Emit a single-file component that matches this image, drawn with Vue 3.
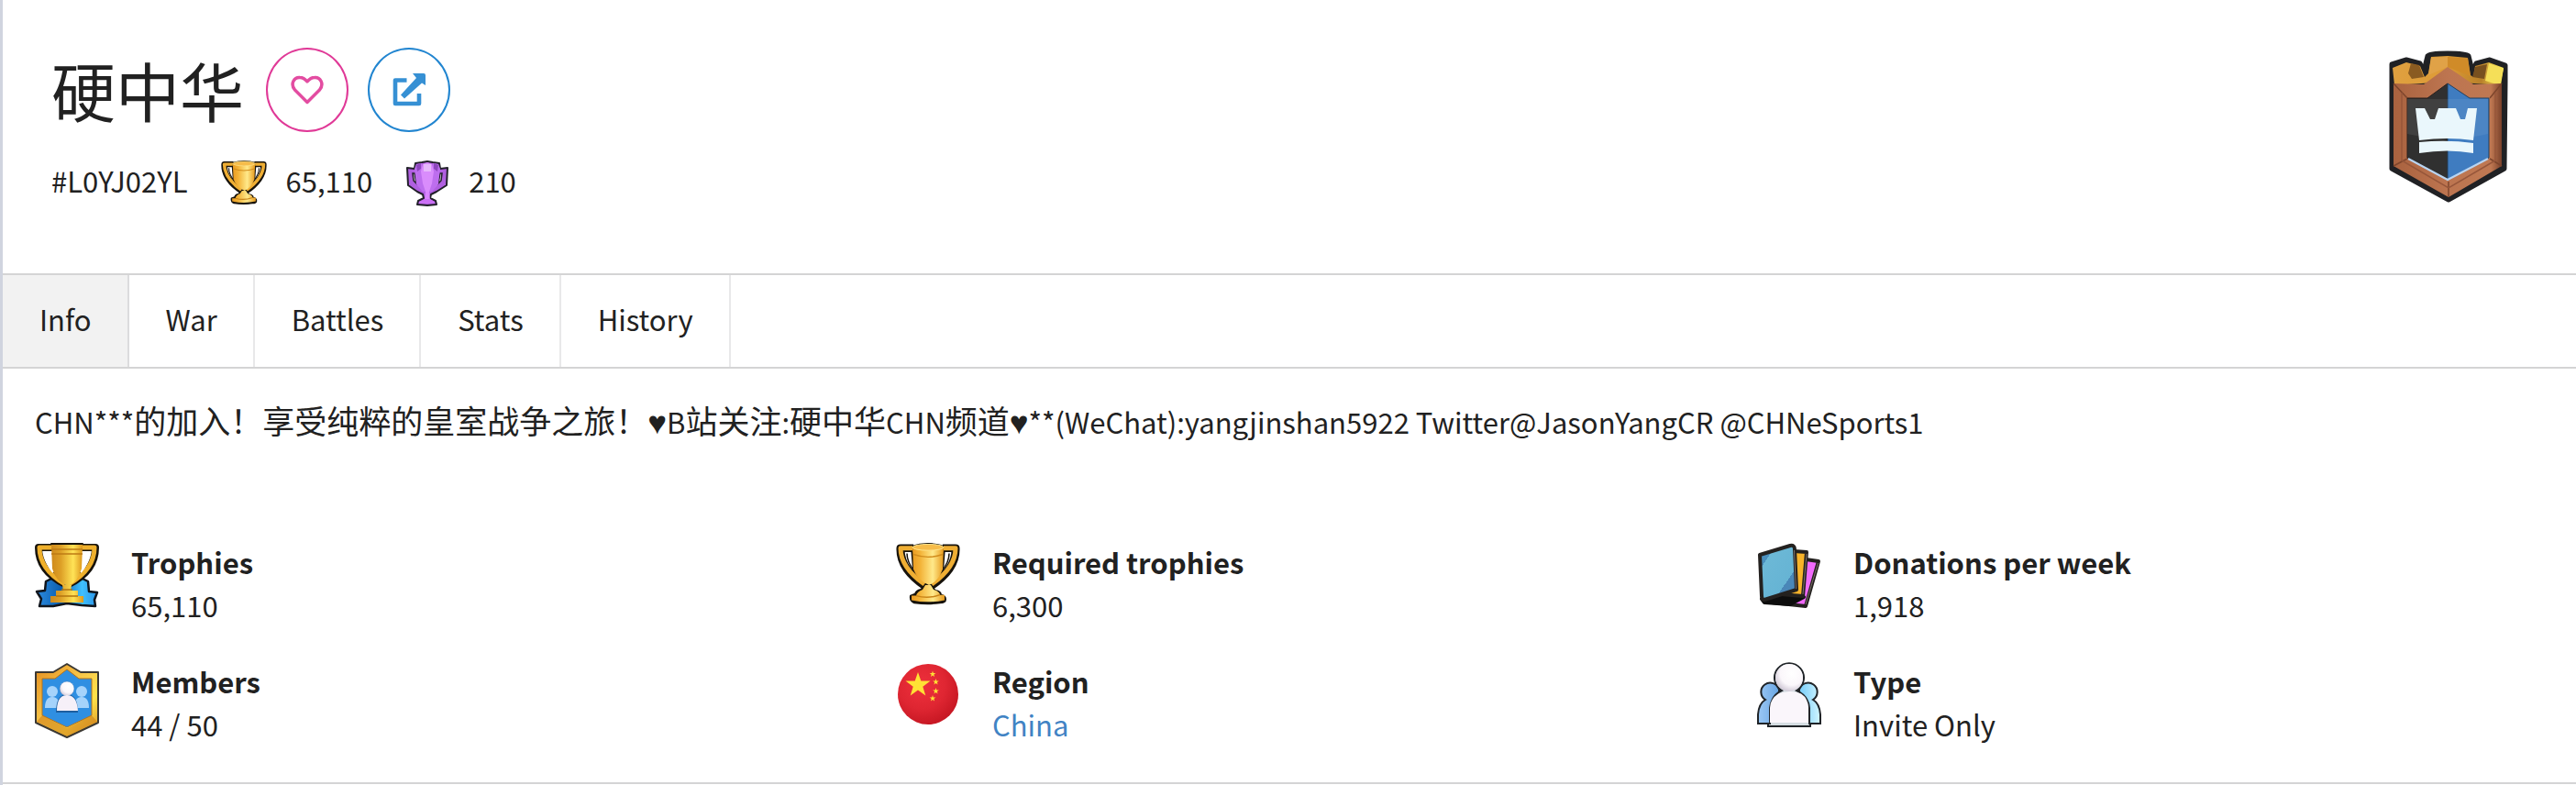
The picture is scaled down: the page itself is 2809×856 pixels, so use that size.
<template>
  <main class="clan">
    <header class="clan-header">
      <div>
        <div class="title-row">
          <h1 class="clan-name">硬中华</h1>
          <div class="actions">
            <button class="circle-btn pink" type="button" aria-label="Save clan">
              <svg width="36" height="32" viewBox="0 0 36 32">
                <path d="M18 29.500 4.500 16C-1 9 4 2 10 2.500 14 2.500 16 4.500 18 7 20 4.500 22 2.500 26 2.500 32 2 37 9 31.500 16Z" fill="none" stroke="currentColor" stroke-width="3.500" stroke-linejoin="round" />
              </svg>
            </button>
            <a class="circle-btn blue" href="#open" aria-label="Open in game">
              <svg width="36" height="36" viewBox="0 0 36 36">
                <path d="M15.500 7.500H3V33H29V22" fill="none" stroke="currentColor" stroke-width="4.600" stroke-linejoin="round" />
                <path d="M22 0H34Q36 0 36 2V13L32 10.500 13 27.500 9 23.500 26 5Z" fill="currentColor" />
              </svg>
            </a>
          </div>
        </div>
        <div class="meta-row">
          <span>#L0YJ02YL</span>
          <span class="meta-item">
            <svg width="50" height="50" viewBox="0 0 70 70"><use href="#cup" /></svg>
            65,110
          </span>
          <span class="meta-item">
            <svg width="48" height="50" viewBox="0 0 48 50">
              <path d="M11 3 18 2 24 1 30 2 37 3 38 9 46 8 45 27 34 34 28 37 27 41 33 44 34 48 24 49 13 48 14 44 20 41 19 37 13 34 3 27 2 8 10 9Z" fill="#b05fe0" stroke="#22202a" stroke-width="2" stroke-linejoin="round" />
              <path d="M10 14 8 14 9 22 12 25ZM38 14H40L39 22 36 25Z" fill="#e8dff0" stroke="#22202a" stroke-width="1.500" />
              <path d="M10 9 12 4 18 3V9L24 12 30 9V3L36 4 38 9 36 26 29 34H19L12 26Z" fill="#bd6eee" />
              <path d="M12 5 17 3V9L13 12ZM31 3 36 5 35 12 31 9Z" fill="#8d46bd" />
              <path d="M19 4 24 2 29 4 31 12 29 25 26 34H22L19 25 17 12Z" fill="#d98cfc" />
              <path d="M20 4 28 4V12H20Z" fill="#e6b8fb" />
              <path d="M22 34H26L27 43H21Z" fill="#d985ff" />
              <path d="M15 45 21 42H27L32 45V47H15Z" fill="#cb70f5" />
            </svg>
            210
          </span>
        </div>
      </div>
      <svg class="badge" width="130" height="166" viewBox="0 0 130 166" role="img" aria-label="Clan badge">
        <defs>
          <linearGradient id="wood" x1="0" x2="1">
            <stop offset="0" stop-color="#a9623f" />
            <stop offset=".5" stop-color="#bd7550" />
            <stop offset=".9" stop-color="#bf7852" />
            <stop offset="1" stop-color="#7a412a" />
          </linearGradient>
          <linearGradient id="badgeGold" x1="0" x2="1">
            <stop offset="0" stop-color="#dfa040" />
            <stop offset=".5" stop-color="#dd9b35" />
            <stop offset=".8" stop-color="#b8802a" />
            <stop offset="1" stop-color="#fff05a" />
          </linearGradient>
        </defs>
        <path d="M3 15 19 10 34 14 38 22 42 6Q44 3 64 3T87 6L91 22 95 14 110 10 127 16V34L126 129 65 163 3 129V38Z" fill="#202124" stroke="#202124" stroke-width="5" stroke-linejoin="round" />
        <path d="M4 19 19 13 34 17 39 29 43 25 46 7 64 6 86 8 89 27 92 29 94 17 109 13 125 19 122 38 64 34 6 38Z" fill="url(#badgeGold)" />
        <path d="M24 14 33 16 38 29 25 31 21 25Z" fill="#8a5b21" />
        <path d="M94 18 107 15 104 31 91 29Z" fill="#78501f" />
        <path d="M109 14 125 20 121 38 105 33Z" fill="#f5df58" />
        <path d="M64 7 86 9 89 28 64 18Z" fill="#d08b28" />
        <path d="M46 8 64 7V18L43 27Z" fill="#e0a247" />
        <path d="M5 36 38 37 64 18 92 37 123 36V126L65 160 5 126Z" fill="url(#wood)" />
        <path d="M5 36 20 52M123 36 110 52M5 126 20 118M123 126 110 118M65 143V160" stroke="#7d452c" stroke-width="1.500" />
        <path d="M14 46V120L65 150 116 120V46" fill="none" stroke="#96563a" stroke-width="1.500" />
        <path d="M20 52H42L64 36V141L20 117Z" fill="#303030" stroke="#2a201c" />
        <path d="M64 36 88 52H109V117L64 141Z" fill="#3f7cc0" stroke="#22405f" />
        <path d="M20 91Q42 96 64 96V53H20Z" fill="#fff" opacity=".08" />
        <path d="M64 96Q88 96 108 91V53H64Z" fill="#fff" opacity=".07" />
        <path d="M21 118 64 141 108 118" fill="none" stroke="#b9d5f2" stroke-width="2" />
        <path d="M29 63H39L45 75H50L54 63H73L78 75H83L86 63H96L92 98Q64 94 33 98Z" fill="#eaf7fc" />
        <path d="M33 100Q64 97 92 101V112Q64 107 33 112Z" fill="#eaf7fc" />
      </svg>
    </header>

    <nav class="tabs">
      <a
        v-for="tab in tabs"
        :key="tab"
        class="tab"
        :class="{ active: tab === 'Info' }"
        :href="'#' + tab.toLowerCase()"
      >{{ tab }}</a>
    </nav>

    <section class="info">
      <p class="description">
        <span v-for="(run, i) in description" :key="i" :class="run.kind">{{ run.text }}</span>
      </p>

      <dl class="stats">
        <div v-for="stat in stats" :key="stat.label" class="stat">
          <svg class="stat-icon" width="70" height="84" viewBox="0 0 70 84">
            <use :href="'#' + stat.icon" />
          </svg>
          <div>
            <dt class="stat-label">{{ stat.label }}</dt>
            <dd class="stat-value">
              <a v-if="stat.link" :href="stat.link">{{ stat.value }}</a>
              <template v-else>{{ stat.value }}</template>
            </dd>
          </div>
        </div>
      </dl>
    </section>

    <!-- shared icon shapes -->
    <svg class="sprite" width="0" height="0" aria-hidden="true">
      <defs>
        <linearGradient id="gold" x1="0" x2="1">
          <stop offset="0" stop-color="#e99b22" />
          <stop offset=".25" stop-color="#f3b338" />
          <stop offset=".65" stop-color="#ffe98a" />
          <stop offset="1" stop-color="#e79a1d" />
        </linearGradient>
        <linearGradient id="goldDeep" x1="0" x2="1">
          <stop offset="0" stop-color="#cf8a1c" />
          <stop offset=".3" stop-color="#dd9f26" />
          <stop offset=".7" stop-color="#ffe356" />
          <stop offset="1" stop-color="#dd971d" />
        </linearGradient>
        <linearGradient id="ribbon" x1="0" x2="1">
          <stop offset="0" stop-color="#2b8be0" />
          <stop offset=".4" stop-color="#0d5fae" />
          <stop offset=".75" stop-color="#3fc0ff" />
          <stop offset="1" stop-color="#2a93e6" />
        </linearGradient>
        <linearGradient id="frame" x1="0" x2="1" y2="1">
          <stop offset="0" stop-color="#e28d20" />
          <stop offset=".45" stop-color="#f9c84a" />
          <stop offset=".7" stop-color="#ffe34a" />
          <stop offset="1" stop-color="#d98c1f" />
        </linearGradient>
        <linearGradient id="glass" x1="0" x2="1" y2="1">
          <stop offset="0" stop-color="#4a8fbd" />
          <stop offset=".22" stop-color="#4a8fbd" />
          <stop offset=".22" stop-color="#6cb8d6" />
          <stop offset=".7" stop-color="#66b4d4" />
          <stop offset=".7" stop-color="#4a87b8" />
          <stop offset="1" stop-color="#4a87b8" />
        </linearGradient>
        <radialGradient id="flagRed" cx=".4" cy=".35" r=".65">
          <stop offset="0" stop-color="#ee303c" />
          <stop offset=".6" stop-color="#df2632" />
          <stop offset="1" stop-color="#c81824" />
        </radialGradient>
        <radialGradient id="pearl" cx=".6" cy=".35" r=".7">
          <stop offset="0" stop-color="#fff" />
          <stop offset=".6" stop-color="#fbf7fb" />
          <stop offset="1" stop-color="#cbc3d2" />
        </radialGradient>
        <linearGradient id="sky" x1="0" x2="1">
          <stop offset="0" stop-color="#9cc8f4" />
          <stop offset=".4" stop-color="#5f9fe0" />
          <stop offset=".7" stop-color="#7fd0fa" />
          <stop offset="1" stop-color="#d2f6ff" />
        </linearGradient>
        <path id="star" d="M0-14 3.300-4.500H13.500L5.300 1.700 8.300 11.500 0 5.500-8.300 11.500-5.300 1.700-13.500-4.500H-3.300Z" fill="#ffe135" />

        <g id="cup" stroke-linejoin="round" transform="scale(1 .96)">
          <path d="M19 6H5Q4 30 33 50M51 6H65Q66 30 37 50" fill="none" stroke="#17130c" stroke-width="9" />
          <path d="M17 4Q35-2 53 4L51 32Q46 45 38 49L43 54Q49 55 49 59 54 60 54 64 54 68 48 68 35 70 20 68 15 66 16 60L21 58Q22 54 27 53L32 49Q20 42 19 30Z" fill="#17130c" stroke="#17130c" stroke-width="2" />
          <path d="M18 6H5Q5 28 31 47M52 6H65Q65 28 39 47" fill="none" stroke="#efae33" stroke-width="5" />
          <path d="M12 12Q12 22 20 32M58 12Q58 22 50 32" fill="none" stroke="#17130c" stroke-width="1.500" />
          <path d="M18 5Q35 10 52 5L51 30Q46 44 36 48 23 42 19 30Z" fill="url(#gold)" />
          <ellipse cx="35" cy="5" rx="17" ry="3.500" fill="#f6bc4a" stroke="#ffe58c" />
          <path d="M19 13Q35 19 51 13" fill="none" stroke="#d18c1c" stroke-width="1.500" />
          <path d="M32 48H38L41 53Q48 55 48 59H53V65Q35 69 17 65V60H22Q23 55 29 53Z" fill="url(#gold)" />
          <path d="M22 60Q35 64 48 59" fill="none" stroke="#c98418" stroke-width="1.500" />
        </g>

        <g id="trophies" stroke-linejoin="round">
          <path d="M12 42 20 38H50L58 42 59 53 68 54 65 62 66 69 51 68 35 66 20 69 5 69 7 61 2 53 11 52Z" fill="url(#ribbon)" stroke="#10151c" stroke-width="2.500" />
          <path d="M20 5H4Q4 31 33 45M50 5H66Q66 31 37 45" fill="none" stroke="#17130c" stroke-width="8" />
          <path d="M18 1H52V6H18Z" stroke="#17130c" stroke-width="2" />
          <path d="M19 5H5Q5 29 33 45M51 5H65Q65 29 37 45" fill="none" stroke="#efb02c" stroke-width="5" />
          <path d="M11 11Q12 23 20 32M59 11Q58 23 50 32" fill="none" stroke="#fff" stroke-width="2" />
          <path d="M18 2H52L51 28Q47 43 36 47 23 43 19 28Z" fill="url(#goldDeep)" />
          <path d="M18 7H52M18 12H52" stroke="#bd7b14" stroke-width="1.500" />
          <path d="M30 46H40L39 52H47V58H53V65H17V58H23V52H31Z" fill="url(#goldDeep)" />
          <path d="M23 58H47M29 51H41" stroke="#b2740f" stroke-width="1.500" />
        </g>

        <g id="members" stroke-linejoin="round">
          <path d="M35 2 50 11H69V66L35 82 1 66V11H20Z" fill="url(#frame)" stroke="#3b3833" stroke-width="2" />
          <path d="M2 65 35 81 68 65 62 58 35 72 8 58Z" fill="#cf7e19" opacity=".6" />
          <path d="M35 8 48 18H62V58L35 71 8 58V18H22Z" fill="#2f8fe2" stroke="#b5721b" stroke-width="1" />
          <g fill="#a5d3fb">
            <circle cx="19" cy="32" r="6" />
            <circle cx="51" cy="32" r="6" />
            <path d="M11 50Q11 38 19 38T27 50ZM43 50Q43 38 51 38T59 50Z" />
          </g>
          <path d="M23 55Q23 35 35 35T47 55Z" fill="#1d5e9f" />
          <circle cx="35" cy="29" r="8" fill="url(#pearl)" stroke="#2873bd" stroke-width=".5" />
          <path d="M24 53Q24 36 35 36T47 53Z" fill="#f6f0f8" />
        </g>

        <g id="region">
          <circle cx="35" cy="35" r="33" fill="url(#flagRed)" />
          <use href="#star" x="24" y="25" />
          <g transform="scale(.25)">
            <use href="#star" x="160" y="52" />
            <use href="#star" x="174" y="86" />
            <use href="#star" x="174" y="126" />
            <use href="#star" x="160" y="158" />
          </g>
        </g>

        <g id="cards" stroke="#24211f" stroke-width="4" stroke-linejoin="round">
          <path d="M46 17 67 20 53 69 16 65Z" fill="#f169fb" />
          <path d="M5 61 40 54 51 59 36 67 8 65Z" fill="#0d0d0d" stroke="#0d0d0d" />
          <path d="M40 9 54 10 50 58 26 56Z" fill="#f7b32a" />
          <path d="M3 13 36 3Q41 2 41 7L43 51 8 62Q5 62 5 58Z" fill="url(#glass)" />
          <path d="M40.500 8 42.500 50M54 12 50 56M66.500 22 53 67" stroke="#7c7069" stroke-width="1" />
        </g>

        <g id="people" stroke="#202428" stroke-width="2">
          <path d="M1 67V57Q2 45 9 41A10 10 0 1 1 24 30V67ZM69 67V57Q68 45 61 41A10 10 0 1 0 46 30V67Z" fill="url(#sky)" />
          <path d="M12 70V67H14V50Q16 36 27 31A16 16 0 1 1 43 31Q56 37 57 50V67H58V70Z" fill="#d5dde2" />
          <circle cx="35" cy="17" r="15" fill="url(#pearl)" stroke="none" />
          <path d="M14 66V50Q15 33 35 32T56 50V66Z" fill="#faf6fb" stroke="none" />
        </g>
      </defs>
    </svg>
  </main>
</template>

<script setup>
const tabs = ['Info', 'War', 'Battles', 'Stats', 'History']

// Han runs and hearts are set a little larger than the Latin text
const description = [
  { text: 'CHN***' },
  { text: '的加入！享受纯粹的皇室战争之旅！', kind: 'han' },
  { text: '♥', kind: 'heart' },
  { text: 'B' },
  { text: '站关注', kind: 'han' },
  { text: ':' },
  { text: '硬中华', kind: 'han' },
  { text: 'CHN' },
  { text: '频道', kind: 'han' },
  { text: '♥', kind: 'heart' },
  { text: '**(WeChat):yangjinshan5922 Twitter@JasonYangCR @CHNeSports1' },
]

const stats = [
  { label: 'Trophies', value: '65,110', icon: 'trophies' },
  { label: 'Required trophies', value: '6,300', icon: 'cup' },
  { label: 'Donations per week', value: '1,918', icon: 'cards' },
  { label: 'Members', value: '44 / 50', icon: 'members' },
  { label: 'Region', value: 'China', icon: 'region', link: '#china' },
  { label: 'Type', value: 'Invite Only', icon: 'people' },
]
</script>

<style>
body {
  margin: 0;
  background: #fff;
}
</style>

<style scoped>
.clan {
  padding-bottom: 2px;
  border-left: 3px solid #d0d4df;
  font-family: 'Noto Sans CJK SC', sans-serif;
  font-size: 31px;
  line-height: 48px;
  color: #212121;
}

.clan a {
  text-decoration: none;
}

/* ── Header ── */
.clan-header {
  display: flex;
  justify-content: space-between;
  align-items: flex-start;
  padding: 52px 74px 73px 53px;
}

.title-row {
  display: flex;
  align-items: center;
  gap: 24px;
}

.clan-name {
  margin: 0;
  font-size: 70px;
  font-weight: 400;
  line-height: 92px;
}

.actions {
  display: flex;
  gap: 21px;
}

.circle-btn {
  display: flex;
  align-items: center;
  justify-content: center;
  box-sizing: border-box;
  width: 90px;
  height: 92px;
  padding: 0;
  border: 2px solid;
  border-radius: 50%;
  background: none;
}

.circle-btn svg {
  opacity: 0.9;
}

.clan .pink {
  color: #e03997;
}

.clan .blue {
  color: #2185d0;
}

.meta-row {
  display: flex;
  align-items: flex-start;
  gap: 36px;
  margin-top: 31px;
  line-height: 44px;
}

.meta-item {
  display: flex;
  align-items: flex-start;
  gap: 21px;
}

.badge {
  margin-top: 3px;
}

/* ── Tabs ── */
.tabs {
  display: flex;
  border-top: 2px solid #d4d4d5;
  border-bottom: 2px solid #d4d4d5;
}

.tab {
  padding: 24px 39px 28px 40px;
  border-right: 2px solid #e8e8e9;
  color: inherit;
}

.active {
  background: #f2f2f2;
  border-color: #dcdcdd;
}

/* ── Info ── */
.info {
  padding: 32px 38px 40px 35px;
  border-bottom: 2px solid #d4d4d5;
}

.description {
  margin: 0 0 104px;
}

.han {
  font-size: 35px;
}

.heart {
  font-family: 'Liberation Sans', sans-serif;
  font-size: 35px;
}

.stats {
  display: grid;
  grid-template-columns: repeat(3, 1fr);
  gap: 36px 84px;
  margin: 0;
  line-height: 47px;
}

.stat {
  display: flex;
  align-items: flex-start;
  gap: 35px;
}

.stat-icon {
  margin-top: 3px;
}

.stat-label {
  font-weight: 700;
}

.stat-value {
  margin: 0;
}

.stat-value a {
  color: #4183c4;
}

.sprite {
  display: block;
}
</style>
